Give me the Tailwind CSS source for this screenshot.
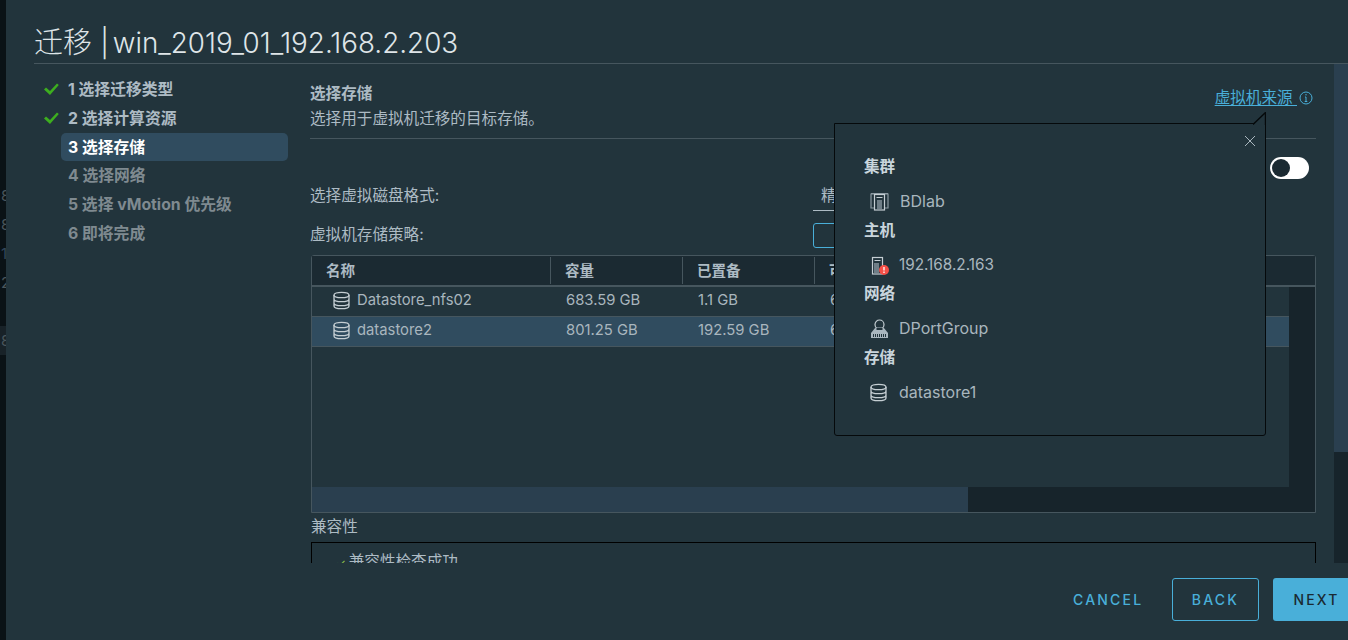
<!DOCTYPE html>
<html lang="zh">
<head>
<meta charset="utf-8">
<script src="https://cdn.jsdelivr.net/npm/@tailwindcss/browser@4"></script>
<title>迁移</title>
</head>
<body class="m-0 h-[640px] w-[1348px] overflow-hidden bg-[#0a1216] font-['Inter','Noto_Sans_CJK_SC',sans-serif]">
<div class="flex h-[640px] w-[1348px]">
  <div class="flex w-[6px] shrink-0 flex-col overflow-hidden pt-[181px] text-[15px] leading-[29px] text-[#4a565c]">
    <span class="ml-px h-[29px]">8</span><span class="ml-px h-[29px]">8</span><span class="ml-px h-[29px] text-[#33475c]">1</span><span class="ml-px h-[29px]">2</span><span class="h-[29px]"></span><span class="h-[29px] bg-[#182228] pl-px">8</span>
  </div>
  <main class="relative flex h-[640px] w-[1342px] flex-col overflow-hidden bg-[#22343c]">
    <header class="ml-[28px] flex h-[64px] w-[1314px] items-end border-b border-[#46565e] pb-[2px]">
      <h1 class="flex whitespace-pre text-[29px] font-light leading-[36px] text-[#dfe5e8]">迁移 <span class="text-[27.800px]">|</span><span class="ml-[4px] text-[27.800px]">win_2019_01_192.168.2.203</span></h1>
    </header>
    <div class="flex h-[499px] overflow-hidden">
      <nav class="ml-[55px] w-[227px] shrink-0 pt-[11px] text-[15.800px] font-bold leading-[29px]">
        <div class="flex h-[29px] items-center text-[#adbbc4]">
          <svg class="-ml-[17px] mr-[2px] h-[15px] w-[15px]" viewBox="0 0 15 15"><path d="M0 7.500 2 5.500 6 9 13 1.500 14.800 3 6 13z" fill="#3dae1f"/></svg>
          <span class="pl-[7px]">1 选择迁移类型</span>
        </div>
        <div class="flex h-[29px] items-center text-[#adbbc4]">
          <svg class="-ml-[17px] mr-[2px] h-[15px] w-[15px]" viewBox="0 0 15 15"><path d="M0 7.500 2 5.500 6 9 13 1.500 14.800 3 6 13z" fill="#3dae1f"/></svg>
          <span class="pl-[7px]">2 选择计算资源</span>
        </div>
        <div class="flex h-[28px] items-center rounded-[5px] bg-[#304c5f] pl-[7px] text-white">3 选择存储</div>
        <div class="flex h-[29px] items-center pl-[7px] text-[#7f8a90]">4 选择网络</div>
        <div class="flex h-[29px] items-center pl-[7px] text-[#7f8a90]">5 选择 vMotion 优先级</div>
        <div class="flex h-[29px] items-center pl-[7px] text-[#7f8a90]">6 即将完成</div>
      </nav>
      <section class="ml-[22px] w-[1006px] shrink-0 pt-[18px] text-[15.600px] text-[#adbbc4]">
        <div class="flex h-[57px] items-start justify-between border-b border-[#46565e] pr-[3px]">
          <div class="pt-px">
            <p class="font-bold leading-[22px]">选择存储</p>
            <p class="mt-px leading-[26px]">选择用于虚拟机迁移的目标存储。</p>
          </div>
          <div class="flex items-center gap-[2px] pt-[4px] text-[#49afd9]">
            <a class="whitespace-pre underline underline-offset-2">虚拟机来源 </a>
            <svg class="h-[14px] w-[14px]" viewBox="0 0 14 14" fill="none" stroke="#49afd9"><circle cx="7" cy="7" r="6"/><path d="M7 6v4M5.700 10.500h2.600M6 6h1"/><circle cx="7" cy="3.800" r=".7" fill="#49afd9" stroke="none"/></svg>
          </div>
        </div>
        <div class="mt-[18px] flex h-[22px] justify-end pr-[7px]">
          <div class="flex h-[22px] w-[39px] items-center rounded-full bg-white pl-[2px]"><span class="h-[18px] w-[18px] rounded-full bg-[#1b2a32]"></span></div>
        </div>
        <div class="mt-[2px] flex h-[30px] items-start">
          <span class="w-[503px] pt-[4px] leading-[22px]">选择虚拟磁盘格式:</span>
          <span class="h-[30px] w-[60px] whitespace-nowrap border-b border-[#adbbc4] pl-[8px] pt-[4px] leading-[22px]">精简置备</span>
        </div>
        <div class="mt-[12px] flex h-[25px] items-start">
          <span class="w-[503px] pt-px leading-[22px]">虚拟机存储策略:</span>
          <span class="h-[25px] w-[80px] rounded-[3px] border border-[#49afd9]"></span>
        </div>
        <div class="ml-px mt-[7px] flex h-[258px] w-[1005px] flex-col rounded-t-[3px] border border-[#46565e]">
          <div class="flex h-[31px] shrink-0 items-center border-b-2 border-[#46565e] bg-[#1b2a32] text-[14.500px] font-bold">
            <div class="flex h-[27px] w-[239px] items-center border-r border-[#46565e] pl-[14px]">名称</div>
            <div class="flex h-[27px] w-[132px] items-center border-r border-[#46565e] pl-[14px]">容量</div>
            <div class="flex h-[27px] w-[132px] items-center border-r border-[#46565e] pl-[14px]">已置备</div>
            <div class="flex h-[27px] flex-1 items-center pl-[14px]">可用</div>
          </div>
          <div class="flex min-h-0 flex-1">
            <div class="flex w-[977px] shrink-0 flex-col">
              <div class="flex h-[30px] items-center border-b border-[#46565e] pb-[3px] text-[14.800px] text-[#a9b6be]">
                <div class="flex w-[239px] items-center pl-[20px]">
                  <svg class="mr-[6px] h-[19px] w-[19px] shrink-0" viewBox="0 0 19 19" fill="none" stroke="#c5ced3" stroke-width="1.300"><ellipse cx="9.500" cy="4" rx="7.500" ry="2.700"/><path d="M2 4v11c0 1.500 3.400 2.700 7.500 2.700S17 16.500 17 15V4M2 8c0 1.500 3.400 2.700 7.500 2.700S17 9.500 17 8M2 12c0 1.500 3.400 2.700 7.500 2.700S17 13.500 17 12"/></svg>
                  Datastore_nfs02
                </div>
                <div class="w-[132px] pl-[15px]">683.59 GB</div>
                <div class="w-[132px] pl-[15px]">1.1 GB</div>
                <div class="flex-1 pl-[15px]">682.49 GB</div>
              </div>
              <div class="flex h-[30px] items-center border-b border-[#46565e] bg-[#304c5f] pb-[3px] text-[14.800px] text-[#a9b6be]">
                <div class="flex w-[239px] items-center pl-[20px]">
                  <svg class="mr-[6px] h-[19px] w-[19px] shrink-0" viewBox="0 0 19 19" fill="none" stroke="#c5ced3" stroke-width="1.300"><ellipse cx="9.500" cy="4" rx="7.500" ry="2.700"/><path d="M2 4v11c0 1.500 3.400 2.700 7.500 2.700S17 16.500 17 15V4M2 8c0 1.500 3.400 2.700 7.500 2.700S17 9.500 17 8M2 12c0 1.500 3.400 2.700 7.500 2.700S17 13.500 17 12"/></svg>
                  datastore2
                </div>
                <div class="w-[132px] pl-[15px]">801.25 GB</div>
                <div class="w-[132px] pl-[15px]">192.59 GB</div>
                <div class="flex-1 pl-[15px]">608.66 GB</div>
              </div>
              <div class="flex-1"></div>
              <div class="flex h-[25px] w-full bg-[#17242b]"><div class="h-full w-[656px] bg-[#2a3f4f]"></div></div>
            </div>
            <div class="flex-1 bg-[#17242b]"></div>
          </div>
        </div>
        <p class="ml-px mt-[3px] leading-[22px]">兼容性</p>
        <div class="ml-px mt-[4px] h-[40px] w-[1005px] border border-b-0 border-black pl-[24px] pt-[8px] leading-[22px]">
          <span class="mr-[3px] text-[11px] text-[#8bc34a]">✓</span>兼容性检查成功
        </div>
      </section>
      <div class="ml-[18px] flex h-[499px] w-[14px] shrink-0 flex-col bg-[#17242b]"><div class="h-[388px] bg-[#2a3f4f]"></div></div>
    </div>
    <footer class="flex h-[77px] items-start pl-[1067px] pt-[15px] text-[14px] font-medium tracking-[2.200px]">
      <button class="flex h-[43px] w-[99px] shrink-0 items-center text-[#49afd9]">CANCEL</button>
      <button class="mr-[14px] flex h-[43px] w-[87px] shrink-0 items-center justify-center rounded-[3px] border border-[#49afd9] text-[#49afd9]">BACK</button>
      <button class="flex h-[43px] w-[85px] shrink-0 items-center justify-center rounded-l-[3px] bg-[#49afd9] pl-[2px] text-[#1b2a32]">NEXT</button>
    </footer>
    <aside class="absolute left-[828px] top-[123px] h-[313px] w-[432px] rounded-b-[3px] border border-[#05090b] bg-[#22343c] px-[29px] pt-[31px] text-[15.600px]">
      <svg class="absolute -top-[12px] -right-px h-[13px] w-[13px]" viewBox="0 0 13 13"><path d="M12.500 .5V13H0z" fill="#22343c"/><path d="M0 12.500 12.500 .5V13" fill="none" stroke="#05090b" stroke-width="1.400"/></svg>
      <svg class="absolute right-[9px] top-[11px] h-[12px] w-[12px]" viewBox="0 0 12 12" stroke="#a9b6be"><path d="M1 1l10 10M11 1 1 11"/></svg>
      <h3 class="font-bold leading-[24px] text-[#c9d5dc]">集群</h3>
      <div class="mt-[10px] flex h-[24px] items-center pl-[6px] text-[16px] text-[#a9b6be]">
        <svg class="mr-[11px] h-[19px] w-[19px] shrink-0" viewBox="0 0 19 19" fill="none"><path d="M4 2H1v14h3M15 2h3v14h-3M1 1.500h17" stroke="#8c9aa2" stroke-width="1.200"/><rect x="4.500" y="2.500" width="10" height="15.500" stroke="#c5ced3" stroke-width="1.200"/><path d="M6.500 5.500h6" stroke="#c5ced3"/><rect x="7" y="8" width="5" height="9" fill="#6f7e87"/></svg>
        BDlab
      </div>
      <h3 class="mt-[6px] font-bold leading-[24px] text-[#c9d5dc]">主机</h3>
      <div class="mt-[10px] flex h-[24px] items-center pl-[6px] text-[15.300px] text-[#a9b6be]">
        <svg class="mr-[10px] h-[19px] w-[19px] shrink-0" viewBox="0 0 19 19" fill="none"><rect x="2.500" y="1.500" width="10" height="16.500" stroke="#c5ced3" stroke-width="1.200"/><path d="M4.500 4.500h6" stroke="#c5ced3"/><rect x="4" y="7" width="5" height="10" fill="#6f7e87"/><circle cx="14" cy="14" r="5" fill="#f54f47"/><path d="M14 11v3.500M14 15.500v1.500" stroke="#fff" stroke-width="1.300"/></svg>
        192.168.2.163
      </div>
      <h3 class="mt-[5px] font-bold leading-[24px] text-[#c9d5dc]">网络</h3>
      <div class="mt-[10px] flex h-[24px] items-center pl-[6px] text-[16px] text-[#a9b6be]">
        <svg class="mr-[10px] h-[19px] w-[19px] shrink-0" viewBox="0 0 19 19" fill="none"><circle cx="9.500" cy="5.500" r="4.500" stroke="#c5ced3" stroke-width="1.200"/><path d="M5.500 8.500 1 14v5h17v-5l-4.500-5.500z" fill="#a9b6be"/><path d="M6.500 9h6v2h-6z" fill="#22343c"/><path d="M3.500 15v3M5.500 15v3M7.500 15v3M9.500 15v3M11.500 15v3M13.500 15v3M15.500 15v3" stroke="#22343c"/></svg>
        DPortGroup
      </div>
      <h3 class="mt-[6px] font-bold leading-[24px] text-[#c9d5dc]">存储</h3>
      <div class="mt-[10px] flex h-[24px] items-center pl-[5px] text-[16px] text-[#a9b6be]">
        <svg class="mr-[11px] h-[19px] w-[19px] shrink-0" viewBox="0 0 19 19" fill="none" stroke="#c5ced3" stroke-width="1.300"><ellipse cx="9.500" cy="4" rx="7.500" ry="2.700"/><path d="M2 4v11c0 1.500 3.400 2.700 7.500 2.700S17 16.500 17 15V4M2 8c0 1.500 3.400 2.700 7.500 2.700S17 9.500 17 8M2 12c0 1.500 3.400 2.700 7.500 2.700S17 13.500 17 12"/></svg>
        datastore1
      </div>
    </aside>
  </main>
</div>
</body>
</html>
